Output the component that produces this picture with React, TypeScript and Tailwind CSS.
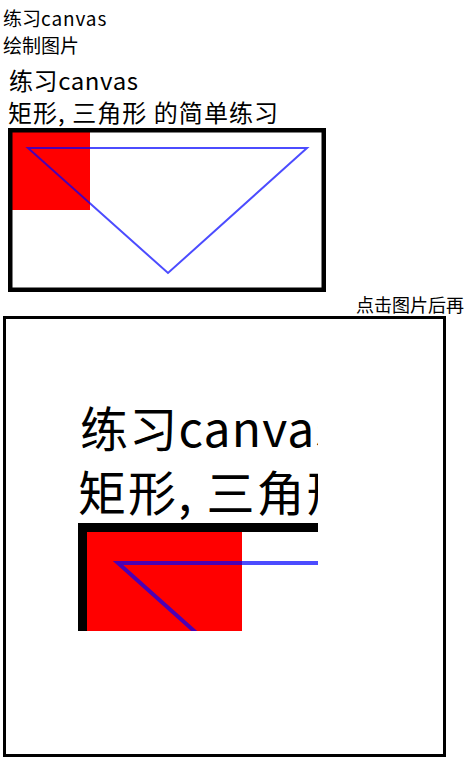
import React from "react"

const FONT = "font-['Noto_Sans_CJK_SC','Noto_Sans',sans-serif]"

// the drawing the page paints on its canvas, reused for the zoomed crop
const CanvasArt: React.FC<{ viewBox: string; width: number; height: number }> = ({
  viewBox,
  width,
  height
}) => (
  <svg
    width={width}
    height={height}
    viewBox={viewBox}
    className="block"
    preserveAspectRatio="xMinYMin slice"
  >
    <text
      x="6"
      y="28"
      fontSize="24"
      fontFamily="'Noto Sans CJK SC', sans-serif"
      fill="#000"
      textLength="129"
      lengthAdjust="spacing"
    >
      练习canvas
    </text>
    <text
      x="5"
      y="60"
      fontSize="24"
      fontFamily="'Noto Sans CJK SC', sans-serif"
      fill="#000"
      textLength="270"
      lengthAdjust="spacing"
    >
      矩形, 三角形 的简单练习
    </text>
    <rect x="7" y="68" width="80" height="80" fill="#ff0000" />
    <rect
      x="7.25"
      y="68.25"
      width="313.5"
      height="159.5"
      fill="none"
      stroke="#000"
      strokeWidth="4.5"
    />
    <polygon
      points="25,86 304,86 165,211"
      fill="none"
      stroke="rgba(0,0,255,0.7)"
      strokeWidth="2"
    />
  </svg>
)

const App: React.FC = () => {
  return (
    <div className={`w-[464px] h-[772px] overflow-hidden bg-white text-black ${FONT}`}>
      <div className="pl-[3px] pt-[4px] text-[19px] leading-[27px]">
        <div>
          练习<span className="tracking-[0.9px]">canvas</span>
        </div>
        <div>绘制图片</div>
      </div>
      <div className="pl-[3px] mt-[4px]">
        <CanvasArt viewBox="0 0 330 234" width={330} height={234} />
      </div>
      <div className="pl-[356px] -mt-[2px] mb-[2px] whitespace-nowrap text-[18px] leading-[20px]">
        点击图片后再看放大的效果
      </div>
      <div className="ml-[3px] w-[443px] h-[441px] border-[3px] border-black">
        <div className="ml-[72px] mt-[72px]">
          <CanvasArt viewBox="5 0 120 120" width={240} height={240} />
        </div>
      </div>
    </div>
  )
}

export default App
